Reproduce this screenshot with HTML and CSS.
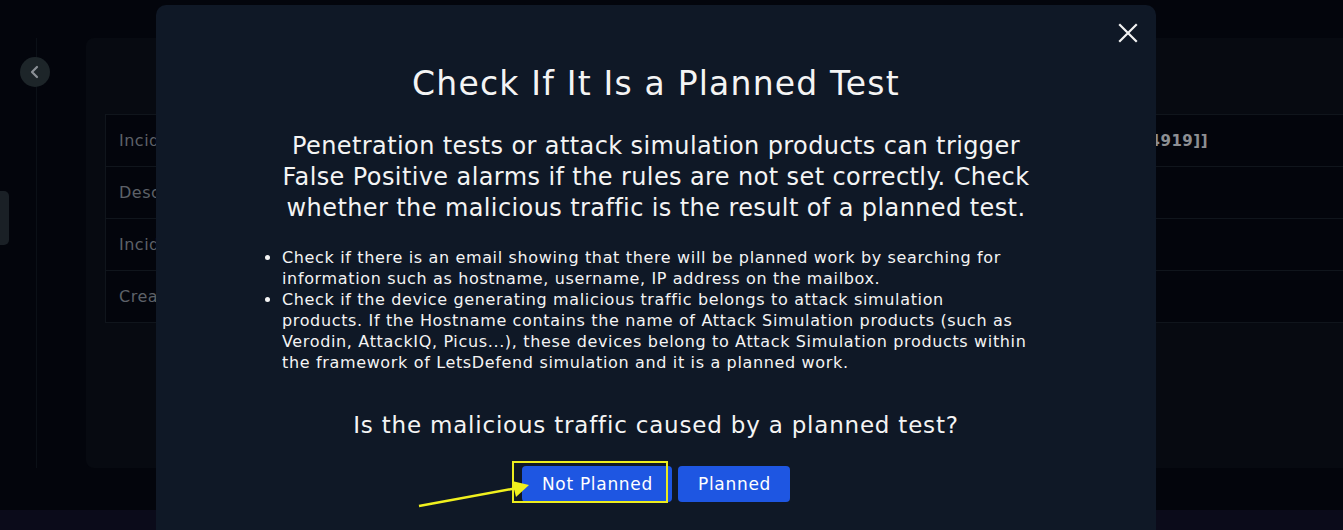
FILE: index.html
```html
<!DOCTYPE html>
<html lang="en">
<head>
<meta charset="utf-8">
<title>Check If It Is a Planned Test</title>
<link rel="stylesheet" href="styles.css">
</head>
<body>
<div class="app">
  <aside class="sidebar">
    <div class="tab"></div>
    <button class="back" aria-label="Back">
      <svg width="16" height="16" viewBox="0 0 16 16"><path d="M10 3 L5 8 L10 13" fill="none" stroke="#8b9096" stroke-width="2.2" stroke-linecap="round" stroke-linejoin="round"/></svg>
    </button>
  </aside>
  <main class="main">
    <section class="card">
      <div class="table">
        <div class="row"><span class="label">Incident Name</span><span class="value">SOC146 - Phishing Mail Detected [[104919]]</span></div>
        <div class="row"><span class="label">Description</span><span class="value"></span></div>
        <div class="row"><span class="label">Incident Type</span><span class="value"></span></div>
        <div class="row"><span class="label">Created Date</span><span class="value"></span></div>
      </div>
    </section>
  </main>
</div>
<div class="footer-band"></div>

<div class="modal" role="dialog">
  <button class="close" aria-label="Close">
    <svg width="20" height="20" viewBox="0 0 20 20"><path d="M2 2 L18 18 M18 2 L2 18" stroke="#f2f2f2" stroke-width="2.2" stroke-linecap="square"/></svg>
  </button>
  <h1 class="title">Check If It Is a Planned Test</h1>
  <p class="lead">Penetration tests or attack simulation products can trigger False Positive alarms if the rules are not set correctly. Check whether the malicious traffic is the result of a planned test.</p>
  <ul class="steps">
    <li>Check if there is an email showing that there will be planned work by searching for information such as hostname, username, IP address on the mailbox.</li>
    <li>Check if the device generating malicious traffic belongs to attack simulation<br>products. If the Hostname contains the name of Attack Simulation products (such as Verodin, AttackIQ, Picus...), these devices belong to Attack Simulation products within the framework of LetsDefend simulation and it is a planned work.</li>
  </ul>
  <p class="question">Is the malicious traffic caused by a planned test?</p>
  <div class="actions">
    <button class="btn">Not Planned</button>
    <button class="btn">Planned</button>
  </div>
  <div class="mark"></div>
  <svg class="arrow" width="130" height="40" viewBox="0 0 130 40">
    <line x1="2" y1="37" x2="100" y2="19" stroke="#f0f01e" stroke-width="2.5"/>
    <polygon points="112,16 95,12 99,28" fill="#f0f01e"/>
  </svg>
</div>
</body>
</html>
```

FILE: styles.css
```css
* { box-sizing: border-box; }
html, body { margin: 0; padding: 0; }
body {
  width: 1343px;
  height: 530px;
  overflow: hidden;
  background: #03050c;
  font-family: "DejaVu Sans", "Open Sans", sans-serif;
  position: relative;
}
.app {
  display: flex;
  height: 510px;
}
.sidebar {
  width: 86px;
  flex: none;
  position: relative;
}
.sidebar::before {
  content: "";
  position: absolute;
  left: 36px;
  top: 38px;
  height: 430px;
  border-left: 1px solid #0b1017;
}
.tab {
  position: absolute;
  left: 0;
  top: 191px;
  width: 9px;
  height: 54px;
  background: #1a2026;
  border-radius: 0 5px 5px 0;
}
.back {
  position: absolute;
  left: 20px;
  top: 57px;
  width: 30px;
  height: 30px;
  border-radius: 50%;
  border: 0;
  padding: 0;
  background: #1d2529;
  display: flex;
  align-items: center;
  justify-content: center;
}
.main {
  flex: 1;
  padding-top: 38px;
}
.card {
  width: 1290px;
  height: 430px;
  background: #070a11;
  border-radius: 8px;
  padding: 76px 0 0 19px;
}
.table {
  border: 1px solid #10151c;
  border-bottom: 0;
  width: 1260px;
}
.row {
  display: flex;
  align-items: center;
  justify-content: space-between;
  height: 52px;
  border-bottom: 1px solid #10151c;
  background: #03050c;
  padding: 0 156px 0 13px;
  font-size: 16px;
  letter-spacing: 0.5px;
}
.label { color: #5d6168; }
.value { color: #8d8f93; font-weight: 700; font-size: 15px; }
.footer-band {
  position: absolute;
  left: 0;
  right: 0;
  bottom: 0;
  height: 20px;
  background: #0b0b1a;
}
.modal {
  position: absolute;
  left: 156px;
  top: 5px;
  width: 1000px;
  height: 560px;
  background: #0f1826;
  border-radius: 10px;
  color: #f4f4f4;
  display: flex;
  flex-direction: column;
  align-items: center;
  padding-top: 59px;
}
.close {
  position: absolute;
  right: 18px;
  top: 18px;
  background: none;
  border: 0;
  padding: 0;
  width: 20px;
  height: 20px;
}
.title {
  margin: 0;
  font-size: 33px;
  font-weight: 400;
  line-height: 40px;
  letter-spacing: 1.2px;
}
.lead {
  margin: 27px 0 0;
  width: 770px;
  text-align: center;
  font-size: 24px;
  line-height: 31px;
  letter-spacing: 0.4px;
}
.steps {
  margin: 23px 0 0;
  width: 800px;
  padding: 0 24px 0 26px;
  font-size: 16px;
  line-height: 21px;
  letter-spacing: 0.65px;
}
.question {
  margin: 37px 0 0;
  font-size: 23px;
  line-height: 30px;
  letter-spacing: 0.8px;
}
.actions {
  margin-top: 26px;
  display: flex;
  gap: 6px;
}
.btn {
  height: 36px;
  border: 0;
  border-radius: 4px;
  background: #1e56e2;
  color: #fff;
  font-family: inherit;
  font-size: 17px;
  letter-spacing: 0.7px;
  padding: 0 19px 0 20px;
}
.mark {
  position: absolute;
  left: 356px;
  top: 456px;
  width: 156px;
  height: 42px;
  border: 2px solid #ecec1e;
}
.arrow {
  position: absolute;
  left: 261px;
  top: 464px;
}
```
